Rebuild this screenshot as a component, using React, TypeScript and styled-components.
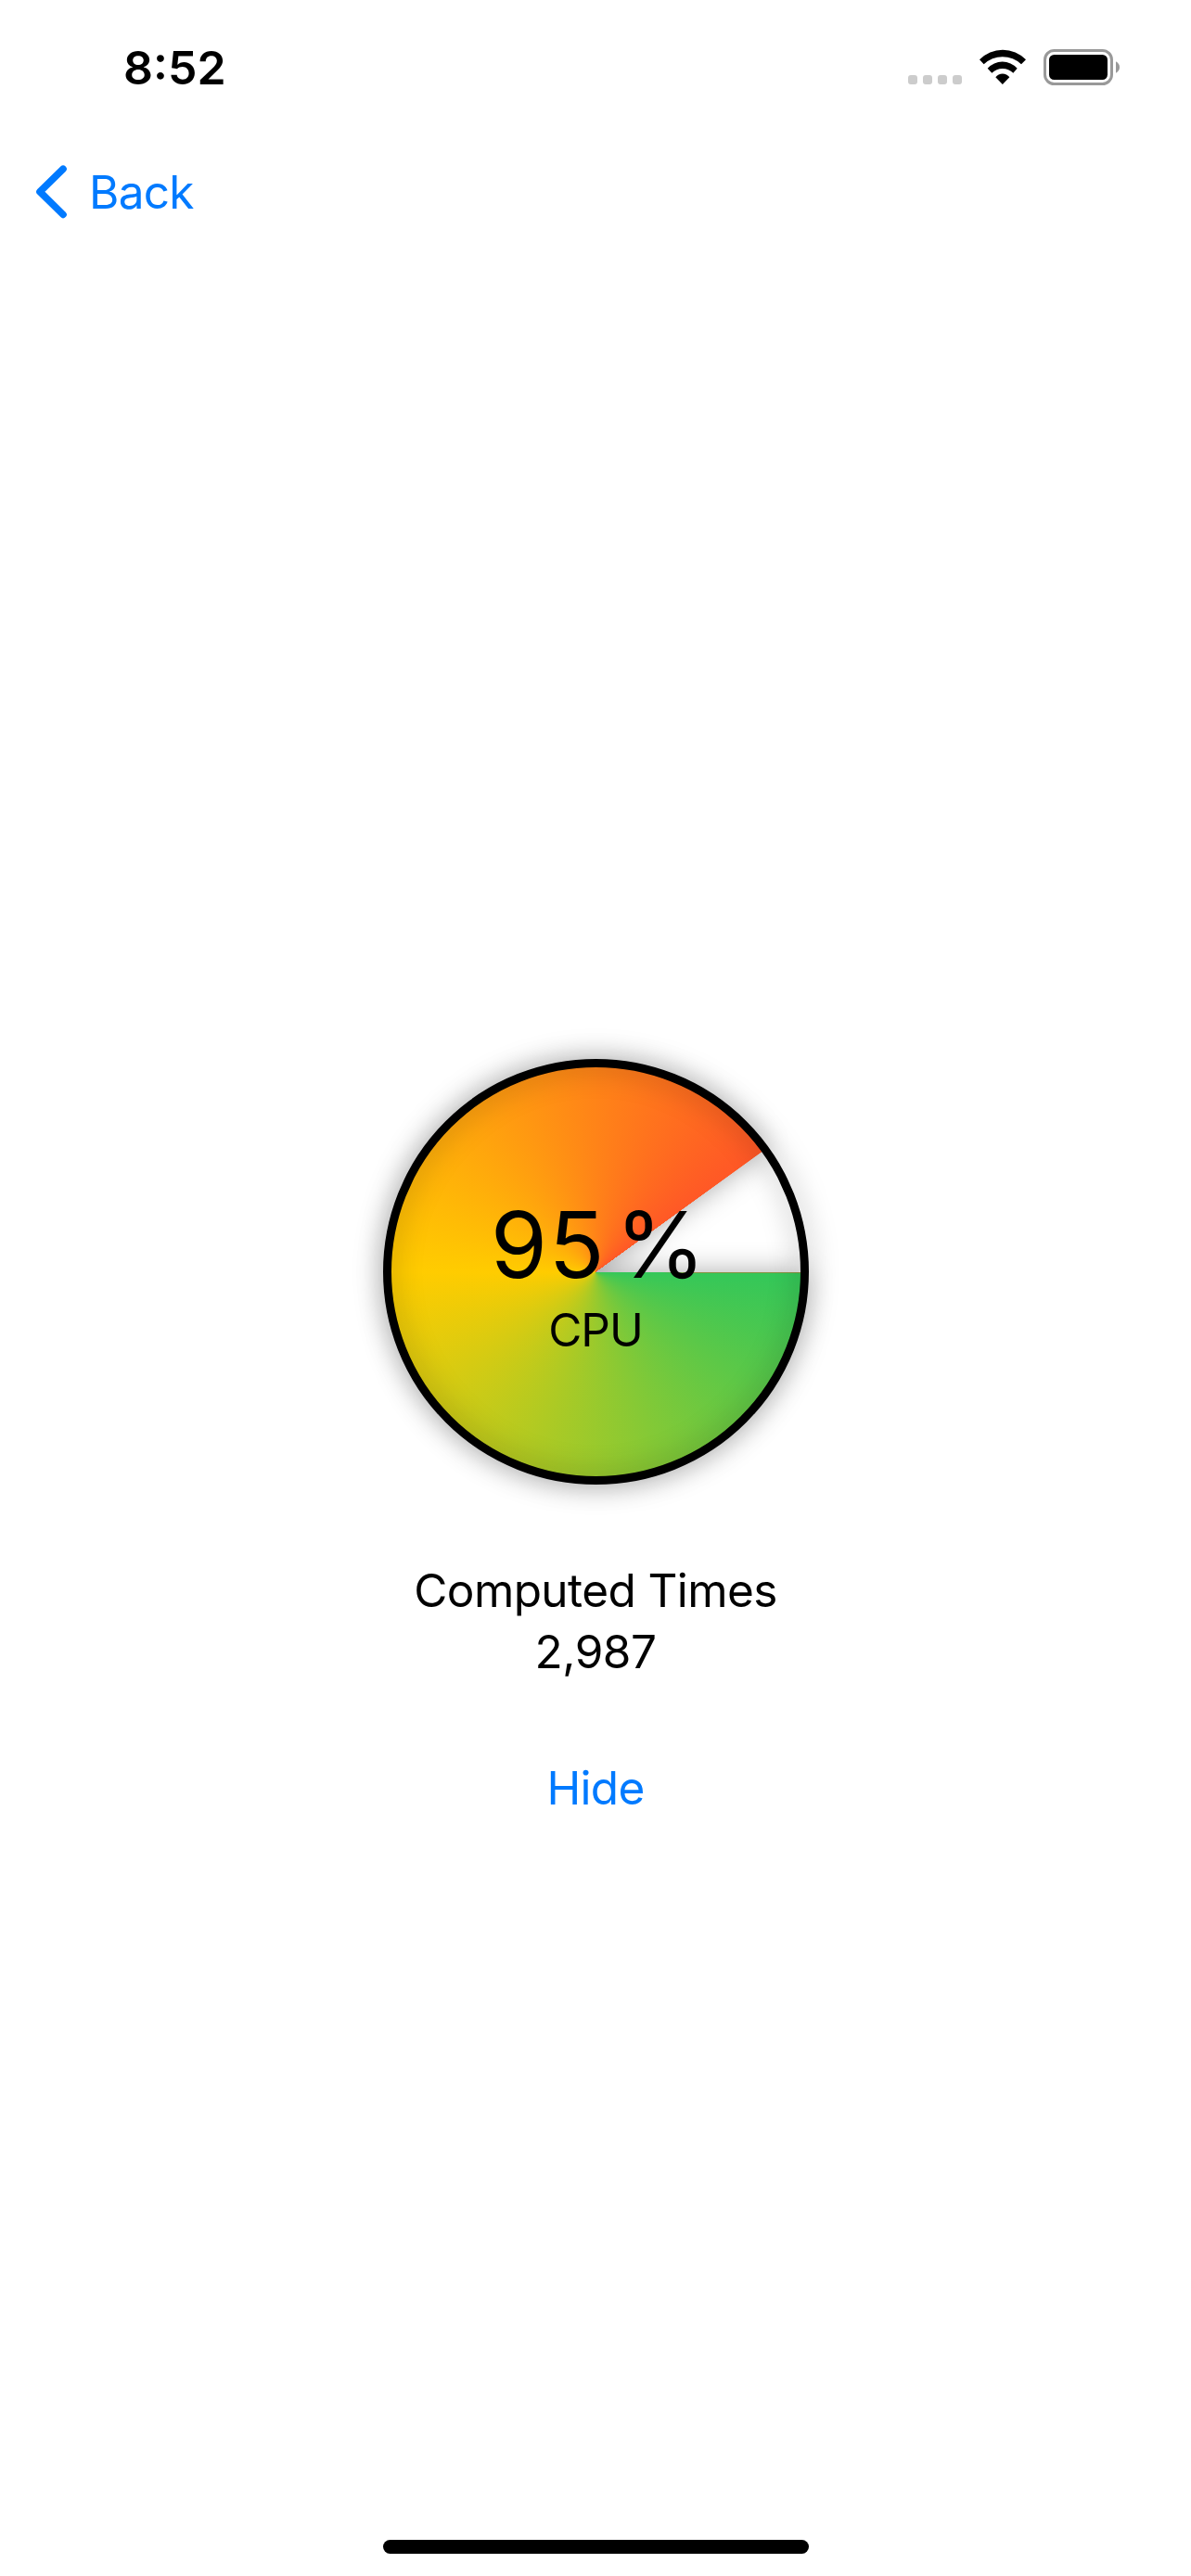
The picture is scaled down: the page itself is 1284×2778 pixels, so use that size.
import React from "react";
import styled, { createGlobalStyle } from "styled-components";

const GlobalStyle = createGlobalStyle`
  html, body { margin: 0; padding: 0; background: #fff; }
  *, *::before, *::after { box-sizing: border-box; }
`;

const BLUE = "#007aff";

const Screen = styled.div`
  display: flex;
  flex-direction: column;
  width: 1284px;
  height: 2778px;
  overflow: hidden;
  background: #fff;
  color: #000;
  font-family: Inter, "Liberation Sans", sans-serif;
  font-size: 49.5px;
  line-height: 66px;
`;

const StatusBar = styled.header`
  display: flex;
  justify-content: space-between;
  height: 141px;
  padding: 40px 76px 0 133px;
`;

const Clock = styled.time`
  font-size: 50px;
  font-weight: 600;
`;

const StatusIcons = styled.div`
  display: flex;
  align-items: flex-start;
  padding-top: 13px;
`;

const SignalDots = styled.div`
  display: flex;
  gap: 6px;
  margin: 28px 18px 0 0;
`;

const Dot = styled.span`
  width: 10px;
  height: 10px;
  border-radius: 3px;
  background: #ccc;
`;

const WifiIcon = styled.svg`
  display: block;
  width: 52px;
  height: 39px;
  margin-right: 18px;
`;

const BatteryIcon = styled.svg`
  display: block;
  width: 83px;
  height: 39px;
`;

const NavBar = styled.nav`
  display: flex;
  align-items: center;
  height: 132px;
  padding-left: 39px;
`;

const TextButton = styled.button<{ $spacing?: number }>`
  display: flex;
  align-items: center;
  padding: 0;
  border: 0;
  background: none;
  color: ${BLUE};
  font: inherit;
  letter-spacing: ${(p) => p.$spacing ?? 0}px;
`;

const Chevron = styled.svg`
  display: block;
  width: 33px;
  height: 58px;
  margin-right: 24px;
`;

const Main = styled.main`
  display: flex;
  flex: 1;
  flex-direction: column;
  align-items: center;
  padding-top: 869px;
  gap: 81px;
`;

const Gauge = styled.section`
  display: grid;
  width: 459px;
  height: 459px;
  place-items: center;

  > * { grid-area: 1 / 1; }
`;

const Pie = styled.div<{ $sweep: number }>`
  width: 450px;
  height: 450px;
  border-radius: 50%;
  background: conic-gradient(
    from 90deg,
    #84933f 0deg,
    #84933f 0.28deg,
    #34c759 0.4deg,
    #ffcc00 180deg,
    #ff5826 ${(p) => p.$sweep}deg,
    transparent ${(p) => p.$sweep + 0.2}deg
  );
  filter: drop-shadow(0 0 15px rgba(0, 0, 0, 0.33));
`;

const Ring = styled.div`
  width: 459px;
  height: 459px;
  border: 9px solid #000;
  border-radius: 50%;
  filter: drop-shadow(0 0 15px rgba(0, 0, 0, 0.33));
`;

const Reading = styled.div`
  display: flex;
  flex-direction: column;
  align-items: center;
  padding-top: 5px;
  z-index: 1;
`;

const Percent = styled.strong`
  padding-left: 7px;
  font-size: 99px;
  font-weight: 440;
  line-height: 122px;
  letter-spacing: 1.5px;
  word-spacing: -19px;
  white-space: pre;
`;

const Caption = styled.span`
  margin-top: -2px;
  letter-spacing: -1px;
`;

const Stats = styled.section`
  display: flex;
  flex-direction: column;
  align-items: center;
`;

const StatLine = styled.span<{ $spacing: number }>`
  letter-spacing: ${(p) => p.$spacing}px;
`;

const HomeArea = styled.footer`
  display: flex;
  justify-content: center;
  height: 39px;
`;

const HomeIndicator = styled.div`
  width: 459px;
  height: 15px;
  border-radius: 7.5px;
  background: #000;
`;

export default function App() {
  return (
    <Screen>
      <GlobalStyle />
      <StatusBar>
        <Clock>8:52</Clock>
        <StatusIcons>
          <SignalDots>
            {[0, 1, 2, 3].map((i) => (
              <Dot key={i} />
            ))}
          </SignalDots>
          <WifiIcon viewBox="287 69 156 117">
            <path d="M290 103A104 104 0 0 1 440 103L425 118A87 87 0 0 0 304 118Z" />
            <path d="M316 131A65 65 0 0 1 412 131L399 146A49 49 0 0 0 330 146Z" />
            <path d="M342 160A28 28 0 0 1 387 160L364.5 183Z" />
          </WifiIcon>
          <BatteryIcon viewBox="0 0 83 39">
            <rect x="1.5" y="1.5" width="72" height="36" rx="10" fill="none" stroke="#999" strokeWidth="3" />
            <rect x="6" y="6" width="63" height="27" rx="5.5" />
            <path d="M78 13.3Q82 15.5 82 19.5T78 25.7Z" fill="#999" />
          </BatteryIcon>
        </StatusIcons>
      </StatusBar>
      <NavBar>
        <TextButton $spacing={-0.7}>
          <Chevron viewBox="0 0 33 58" fill="none" stroke={BLUE} strokeWidth="7.6" strokeLinecap="round" strokeLinejoin="round">
            <path d="M29 4.2L4 28.8L29 53.4" />
          </Chevron>
          Back
        </TextButton>
      </NavBar>
      <Main>
        <Gauge>
          <Pie $sweep={324} />
          <Ring />
          <Reading>
            <Percent>95 %</Percent>
            <Caption>CPU</Caption>
          </Reading>
        </Gauge>
        <Stats>
          <StatLine $spacing={-0.6}>Computed Times</StatLine>
          <StatLine $spacing={-0.5}>2,987</StatLine>
        </Stats>
        <TextButton $spacing={-0.7}>Hide</TextButton>
      </Main>
      <HomeArea>
        <HomeIndicator />
      </HomeArea>
    </Screen>
  );
}
